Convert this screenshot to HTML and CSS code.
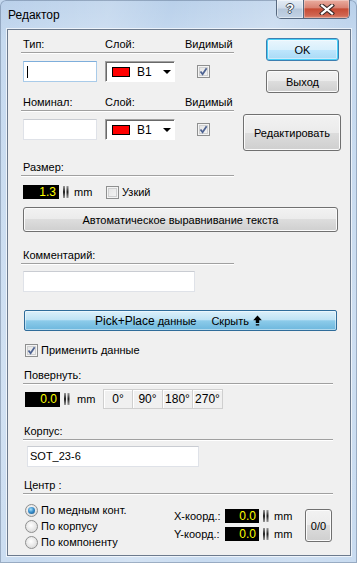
FILE: index.html
```html
<!DOCTYPE html>
<html lang="ru">
<head>
<meta charset="utf-8">
<title>Редактор</title>
<link rel="stylesheet" href="styles.css">
</head>
<body>
<div class="window">
  <div class="titlebar">
    <span class="title">Редактор</span>
    <div class="caption">
      <div class="cap-help">?</div>
      <div class="cap-close">
        <svg width="16" height="11" viewBox="0 0 16 11"><path d="M3 1.5 L13 9.5 M13 1.5 L3 9.5" stroke="#3b2a28" stroke-width="4.2" stroke-linecap="square"/><path d="M3 1.5 L13 9.5 M13 1.5 L3 9.5" stroke="#fff" stroke-width="2.2" stroke-linecap="square"/></svg>
      </div>
    </div>
  </div>
  <div class="client">
    <div class="top">
      <div class="left">
        <div class="hdr">
          <span class="c1">Тип:</span><span class="c2">Слой:</span><span class="c3">Видимый</span>
        </div>
        <div class="row">
          <div class="tb focus tb-small"><span class="caret"></span></div>
          <div class="sel"><span class="swatch"></span><span class="sel-text">B1</span><span class="drop"></span></div>
          <span class="cb cb-vis"><svg width="11" height="11" viewBox="0 0 11 11"><path d="M2.5 5.5 L4.6 8.3 L8.6 2.3" fill="none" stroke="#4e6392" stroke-width="1.8"/></svg></span>
        </div>
        <div class="hdr hdr-gap">
          <span class="c1">Номинал:</span><span class="c2">Слой:</span><span class="c3">Видимый</span>
        </div>
        <div class="row">
          <div class="tb tb-small"></div>
          <div class="sel"><span class="swatch"></span><span class="sel-text">B1</span><span class="drop"></span></div>
          <span class="cb cb-vis"><svg width="11" height="11" viewBox="0 0 11 11"><path d="M2.5 5.5 L4.6 8.3 L8.6 2.3" fill="none" stroke="#4e6392" stroke-width="1.8"/></svg></span>
        </div>
      </div>
      <div class="right">
        <div class="btn btn-default btn-ok">OK</div>
        <div class="btn btn-exit">Выход</div>
        <div class="btn btn-edit">Редактировать</div>
      </div>
    </div>

    <div class="sec sec-size">
      <div class="hdr"><span>Размер:</span></div>
      <div class="numrow size-row">
        <span class="num num-size">1.3</span>
        <span class="spin"><svg width="6" height="12" viewBox="0 0 6 12"><defs><linearGradient id="sg" x1="0" y1="0" x2="0" y2="1"><stop offset="0" stop-color="#9a9a9a"/><stop offset=".5" stop-color="#1c1c1c"/><stop offset="1" stop-color="#9a9a9a"/></linearGradient></defs><rect x="0" y="0" width="2" height="12" fill="url(#sg)"/><rect x="3.5" y="0" width="2" height="12" fill="url(#sg)"/></svg></span>
        <span class="unit">mm</span>
        <span class="cb"></span>
        <span class="cb-label">Узкий</span>
      </div>
    </div>

    <div class="btn btn-auto">Автоматическое выравнивание текста</div>

    <div class="sec sec-comment">
      <div class="hdr"><span>Комментарий:</span></div>
      <div class="tb tb-comment"></div>
    </div>

    <div class="btn-pp">
      <span class="pp-a">Pick+Place</span>
      <span class="pp-b">данные</span>
      <span class="pp-c">Скрыть</span>
      <svg class="pp-arrow" width="9" height="11" viewBox="0 0 9 11"><path d="M4.5 0.5 L8.8 5.2 L6.2 5.2 L6.2 8 L2.8 8 L2.8 5.2 L0.2 5.2 Z" fill="#000"/><rect x="2.8" y="9.2" width="3.4" height="1.3" fill="#000"/></svg>
    </div>

    <div class="apply-row">
      <span class="cb"><svg width="11" height="11" viewBox="0 0 11 11"><path d="M2.5 5.5 L4.6 8.3 L8.6 2.3" fill="none" stroke="#4e6392" stroke-width="1.8"/></svg></span>
      <span class="cb-label">Применить данные</span>
    </div>

    <div class="sec sec-wide sec-rot">
      <div class="hdr hdr-wide"><span>Повернуть:</span></div>
      <div class="rot-row">
        <span class="num num-rot">0.0</span>
        <span class="spin"><svg width="6" height="12" viewBox="0 0 6 12"><rect x="0" y="0" width="2" height="12" fill="url(#sg)"/><rect x="3.5" y="0" width="2" height="12" fill="url(#sg)"/></svg></span>
        <span class="unit unit-rot">mm</span>
        <div class="angles">
          <span class="ang">0°</span><span class="ang">90°</span><span class="ang">180°</span><span class="ang">270°</span>
        </div>
      </div>
    </div>

    <div class="sec sec-wide sec-case">
      <div class="hdr hdr-wide"><span>Корпус:</span></div>
      <div class="tb tb-case">SOT_23-6</div>
    </div>

    <div class="sec sec-wide sec-center">
      <div class="hdr hdr-wide"><span>Центр :</span></div>
    </div>

    <div class="bottom">
      <div class="radios">
        <div class="rrow"><span class="rb on"></span><span class="cb-label">По медным конт.</span></div>
        <div class="rrow"><span class="rb"></span><span class="cb-label">По корпусу</span></div>
        <div class="rrow"><span class="rb"></span><span class="cb-label">По компоненту</span></div>
      </div>
      <div class="coords">
        <div class="crow">
          <span class="clabel">X-коорд.:</span>
          <span class="num num-c">0.0</span>
          <span class="spin"><svg width="6" height="12" viewBox="0 0 6 12"><rect x="0" y="0" width="2" height="12" fill="url(#sg)"/><rect x="3.5" y="0" width="2" height="12" fill="url(#sg)"/></svg></span>
          <span class="unit unit-c">mm</span>
        </div>
        <div class="crow">
          <span class="clabel">Y-коорд.:</span>
          <span class="num num-c">0.0</span>
          <span class="spin"><svg width="6" height="12" viewBox="0 0 6 12"><rect x="0" y="0" width="2" height="12" fill="url(#sg)"/><rect x="3.5" y="0" width="2" height="12" fill="url(#sg)"/></svg></span>
          <span class="unit unit-c">mm</span>
        </div>
      </div>
      <div class="btn btn-zero">0/0</div>
    </div>
  </div>
</div>
</body>
</html>
```
FILE: styles.css
```css
* { box-sizing: border-box; }
html, body { margin: 0; padding: 0; }
body {
  width: 357px;
  height: 563px;
  overflow: hidden;
  font-family: "Liberation Sans", Arial, sans-serif;
  font-size: 11px;
  color: #000;
  background: #c5d9ef;
}
.window {
  width: 357px;
  height: 563px;
  display: flex;
  flex-direction: column;
  border-radius: 6px 6px 0 0;
  background:
    linear-gradient(105deg, rgba(255,255,255,0) 0%, rgba(255,255,255,.18) 22%, rgba(255,255,255,0) 34%, rgba(255,255,255,.22) 55%, rgba(255,255,255,0) 70%, rgba(255,255,255,.12) 88%, rgba(255,255,255,0) 100%),
    linear-gradient(180deg, #b9d0ea 0%, #c5d9ef 40px, #c8dbf0 100%);
  box-shadow: inset 0 0 0 1px rgba(60,80,110,.35);
}
.titlebar {
  height: 29px;
  display: flex;
  align-items: flex-start;
  flex: none;
}
.title {
  margin: 8px 0 0 8px;
  font-size: 12px;
  line-height: 15px;
  color: #000;
}
.caption {
  margin-left: auto;
  margin-right: 7px;
  display: flex;
  height: 19px;
  border: 1px solid #56687f;
  border-top: none;
  border-radius: 0 0 5px 5px;
  overflow: hidden;
}
.cap-help {
  width: 27px;
  border-right: 1px solid #56687f;
  background: linear-gradient(180deg, #e4ecf5 0%, #cfdbe9 45%, #b5c6da 50%, #c3d3e5 100%);
  box-shadow: inset 0 0 0 1px rgba(255,255,255,.45);
  color: #fff;
  font-weight: bold;
  font-size: 13px;
  line-height: 17px;
  text-align: center;
  text-shadow: 1px 0 #3e4a58, -1px 0 #3e4a58, 0 1px #3e4a58, 0 -1px #3e4a58;
}
.cap-close {
  width: 45px;
  background: linear-gradient(180deg, #eaada0 0%, #d98474 42%, #c64b34 50%, #d06550 85%, #dc8a74 100%);
  box-shadow: inset 0 0 0 1px rgba(255,255,255,.3);
  display: flex;
  align-items: center;
  justify-content: center;
}
.client {
  flex: 1;
  margin: 0 6px 7px 7px;
  border: 1px solid #6c7a8d;
  background: #f0f0f0;
  box-shadow: 0 0 0 1px rgba(255,255,255,.65);
  display: flex;
  flex-direction: column;
  align-items: flex-start;
}

/* headers */
.hdr {
  height: 17px;
  line-height: 16px;
  border-bottom: 1px solid #a0a0a0;
  box-shadow: 0 1px 0 #fff;
  display: flex;
  padding-left: 2px;
  width: 100%;
}
.hdr-wide { padding-left: 1px; }
.c1 { width: 82px; }
.c2 { width: 80px; }
.c3 { width: auto; }

.top { display: flex; width: 100%; }
.left { margin-left: 13px; width: 213px; padding-top: 6px; }
.right {
  padding-top: 8px;
  padding-left: 9px;
  display: flex;
  flex-direction: column;
  align-items: flex-start;
}
.row {
  display: flex;
  align-items: center;
  height: 21px;
  margin-top: 8px;
  padding-left: 2px;
}
.hdr-gap { margin-top: 12px; }

/* text boxes */
.tb {
  height: 21px;
  background: #fff;
  border: 1px solid #dfe2e8;
  border-top-color: #c9ccd2;
  padding-left: 3px;
  line-height: 19px;
  display: flex;
  align-items: center;
}
.tb-small { width: 74px; margin-right: 8px; }
.tb.focus { border-color: #a9cbe9; border-top-color: #7eaedb; }
.caret { width: 1px; height: 12px; background: #000; margin-left: 0; }
.tb-comment { width: 172px; margin: 7px 0 0 2px; }
.tb-case { width: 172px; margin: 6px 0 0 4px; padding-left: 2px; }

/* select */
.sel {
  width: 70px;
  height: 21px;
  background: #fff;
  border: 1px solid;
  border-color: #a0a0a0 #ffffff #ffffff #a0a0a0;
  box-shadow: inset 1px 1px 0 #696969;
  display: flex;
  align-items: center;
}
.swatch {
  width: 18px;
  height: 10px;
  background: #ff0000;
  border: 1px solid #000;
  margin-left: 6px;
}
.sel-text { margin-left: 7px; font-size: 12px; }
.drop {
  margin-left: auto;
  margin-right: 3px;
  width: 0;
  height: 0;
  border-left: 4px solid transparent;
  border-right: 4px solid transparent;
  border-top: 4px solid #000;
}

/* checkbox & radio */
.cb {
  width: 13px;
  height: 13px;
  flex: none;
  border: 1px solid #8e8f8f;
  background: linear-gradient(135deg, #e2e2e2 0%, #f6f6f6 100%);
  box-shadow: inset 0 0 0 1px #f4f4f4, inset 0 0 0 2px #cfd0d1;
  display: flex;
  align-items: center;
  justify-content: center;
}
.cb-vis { margin-left: 22px; }
.cb-label { margin-left: 3px; line-height: 13px; white-space: nowrap; }
.rb {
  width: 13px;
  height: 13px;
  flex: none;
  border-radius: 50%;
  border: 1px solid #8e8f8f;
  background: radial-gradient(circle at 45% 40%, #ffffff 0%, #e6e6e6 55%, #cfcfcf 100%);
  display: flex;
  align-items: center;
  justify-content: center;
}
.rb.on::after {
  content: "";
  width: 7px;
  height: 7px;
  border-radius: 50%;
  background: radial-gradient(circle at 40% 35%, #a8e2fb 0%, #3a8fcc 45%, #17507f 100%);
}

/* buttons */
.btn {
  border: 1px solid #707070;
  border-radius: 3px;
  background: linear-gradient(180deg, #f2f2f2 0%, #ebebeb 50%, #dddddd 50%, #cfcfcf 100%);
  box-shadow: inset 0 0 0 1px #fbfbfb;
  display: flex;
  align-items: center;
  justify-content: center;
  white-space: nowrap;
}
.btn-default {
  border-color: #3c7fb1;
  background: linear-gradient(180deg, #eaf6fd 0%, #d9f0fc 50%, #bee6fd 50%, #a7d9f5 100%);
  box-shadow: inset 0 0 0 1px #48d0f8, inset 0 0 0 2px rgba(255,255,255,.4);
}
.btn-ok { width: 73px; height: 23px; margin-left: 23px; }
.btn-exit { width: 73px; height: 23px; margin-left: 23px; margin-top: 9px; }
.btn-edit { width: 98px; height: 37px; margin-top: 21px; }
.btn-auto { width: 315px; height: 25px; margin: 8px 0 0 15px; }
.btn-zero { width: 27px; height: 33px; margin-top: 7px; }

/* sections */
.sec { margin-left: 13px; width: 213px; }
.sec-size { margin-top: 8px; }
.sec-comment { margin-top: 15px; }
.sec-wide { margin-left: 15px; width: 310px; }
.sec-rot { margin-top: 10px; }
.sec-case { margin-top: 14px; }
.sec-center { margin-top: 10px; }

.numrow { display: flex; align-items: center; height: 14px; margin-top: 9px; padding-left: 2px; }
.num {
  background: #000;
  color: #ffff00;
  font-size: 12px;
  text-align: right;
  padding-right: 3px;
  line-height: 14px;
  height: 14px;
  flex: none;
}
.num-size { width: 36px; }
.spin { display: flex; margin-left: 4px; height: 12px; flex: none; }
.unit { margin-left: 5px; width: 32px; flex: none; }

.btn-pp {
  width: 313px;
  height: 21px;
  margin: 18px 0 0 16px;
  border: 1px solid #2f6c9a;
  border-radius: 2px;
  background: linear-gradient(180deg, #dcf0fa 0%, #bfe3f5 45%, #8ccbea 52%, #6db7dd 100%);
  box-shadow: inset 0 0 0 1px rgba(255,255,255,.45);
  display: flex;
  align-items: center;
  justify-content: center;
  padding-right: 4px;
}
.pp-a { font-size: 12px; }
.pp-b { margin-left: 3px; }
.pp-c { margin-left: 15px; }
.pp-arrow { margin-left: 4px; }

.apply-row { display: flex; align-items: center; margin: 12px 0 0 17px; height: 14px; }

.rot-row { display: flex; align-items: center; height: 20px; margin-top: 5px; padding-left: 2px; }
.num-rot { width: 35px; height: 15px; line-height: 15px; }
.unit-rot { width: 26px; margin-left: 7px; }
.angles { display: flex; }
.ang {
  width: 30px;
  height: 20px;
  line-height: 18px;
  text-align: center;
  border: 1px solid #cfcfcf;
  border-left: none;
  background: #f0f0f0;
  box-shadow: inset 1px 1px 0 #fff;
  font-size: 12px;
}
.ang:first-child { border-left: 1px solid #cfcfcf; }

.bottom { display: flex; margin: 8px 0 0 17px; align-items: flex-start; }
.radios { width: 149px; }
.rrow { display: flex; align-items: center; height: 16px; }
.coords { margin-top: 7px; }
.crow { display: flex; align-items: center; height: 14px; margin-bottom: 4px; }
.clabel { width: 51px; white-space: nowrap; }
.num-c { width: 34px; }
.unit-c { width: 31px; }
```
